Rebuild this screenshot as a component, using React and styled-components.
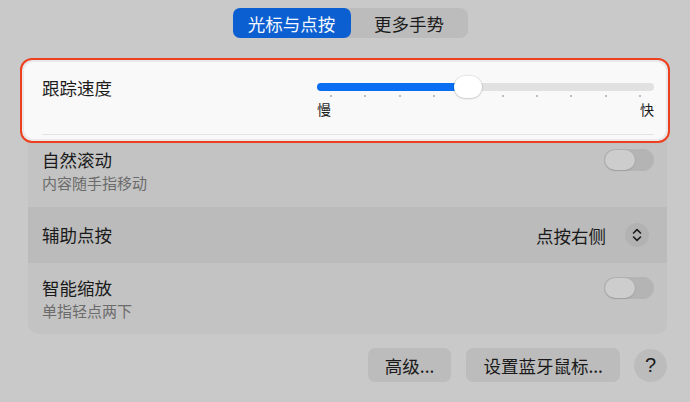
import React from 'react';
import styled, { createGlobalStyle } from 'styled-components';

const GlobalStyle = createGlobalStyle`
  html, body {
    margin: 0;
    padding: 0;
    background: #c9c9c9;
  }
  body {
    font-family: "Noto Sans CJK SC", "Noto Sans", sans-serif;
    color: #1d1d1d;
  }
`;

const Page = styled.div`
  width: 690px;
  height: 402px;
  box-sizing: border-box;
  padding: 8px 23px 0 28px;
  overflow: hidden;
`;

const TabBar = styled.div`
  display: flex;
  justify-content: center;
  padding-left: 5px;
`;

const Tabs = styled.div`
  display: flex;
  background: #bcbcbc;
  border-radius: 8px;
  height: 30px;
`;

const Tab = styled.div`
  width: ${(p) => (p.$active ? '118px' : '117px')};
  display: flex;
  align-items: center;
  justify-content: center;
  border-radius: 7px;
  font-size: 17.5px;
  background: ${(p) => (p.$active ? '#0b5fd0' : 'transparent')};
  color: ${(p) => (p.$active ? '#f4f8ff' : '#1d1d1d')};
`;

const Card = styled.div`
  margin-top: 20px;
  background: #c3c3c3;
  border-radius: 10px;
`;

const Spotlight = styled.div`
  margin: 0 -3px 0 -8px;
  border: 2px solid #ee3f1f;
  border-radius: 12px;
  padding: 2px;
  background: #e9e9e9;
`;

const SpotInner = styled.div`
  background: #f9f9f9;
  border-radius: 9px;
  padding: 14px 12px 4px 18px;
`;

const SpotRow = styled.div`
  display: flex;
  align-items: flex-start;
`;

const SpotLabel = styled.div`
  flex: 1;
  font-size: 17.5px;
  line-height: 22px;
  margin-top: 1px;
`;

const Slider = styled.div`
  width: 337px;
`;

const TrackWrap = styled.div`
  position: relative;
  height: 22px;
`;

const Track = styled.div`
  position: absolute;
  left: 0;
  right: 0;
  top: 7px;
  height: 8px;
  border-radius: 4px;
  background: #e1e1e1;
  overflow: hidden;
`;

const Fill = styled.div`
  height: 100%;
  background: #0a6ef3;
`;

const Tick = styled.span`
  position: absolute;
  top: 19px;
  width: 2px;
  height: 2px;
  border-radius: 1px;
  background: #a8a8a8;
`;

const Thumb = styled.div`
  position: absolute;
  top: 0;
  width: 28px;
  height: 22px;
  border-radius: 11px;
  background: #ffffff;
  box-shadow: 0 0.5px 2px rgba(0, 0, 0, 0.25), 0 0 0 0.5px rgba(0, 0, 0, 0.06);
`;

const SliderLabels = styled.div`
  display: flex;
  justify-content: space-between;
  margin-top: 3px;
  font-size: 14px;
  line-height: 16px;
`;

const Divider = styled.div`
  height: 1px;
  background: #e3e3e3;
  margin-top: 17px;
`;

const Row = styled.div`
  display: flex;
  align-items: ${(p) => (p.$center ? 'center' : 'flex-start')};
  padding: ${(p) => p.$pad};
  height: ${(p) => p.$height || 'auto'};
  box-sizing: border-box;
  background: ${(p) => (p.$dark ? '#bbbbbb' : 'transparent')};
`;

const RowText = styled.div`
  flex: 1;
`;

const Title = styled.div`
  font-size: 17.5px;
  line-height: 22px;
  color: #1a1a1a;
`;

const Subtitle = styled.div`
  font-size: 15px;
  line-height: 20px;
  color: #6b6b6b;
  margin-top: 2px;
`;

const Toggle = styled.div`
  width: 50px;
  height: 22px;
  border-radius: 11px;
  background: #b4b4b4;
  display: flex;
  align-items: center;
  padding: 0 1px;
  box-sizing: border-box;
`;

const Knob = styled.div`
  width: 30px;
  height: 20px;
  border-radius: 10px;
  background: #cdcdcd;
  box-shadow: 0 0.5px 1.5px rgba(0, 0, 0, 0.2);
`;

const Value = styled.div`
  font-size: 17.5px;
  color: #1a1a1a;
  margin-right: 19px;
`;

const Stepper = styled.div`
  width: 24px;
  height: 24px;
  border-radius: 12px;
  background: #b2b2b2;
  display: flex;
  align-items: center;
  justify-content: center;
  margin-right: 5px;
`;

const Footer = styled.div`
  display: flex;
  justify-content: flex-end;
  align-items: center;
  gap: 15px;
  margin-top: 14px;
`;

const Button = styled.div`
  height: 34px;
  padding: 0 17px;
  display: flex;
  align-items: center;
  border-radius: 7px;
  background: #bcbcbc;
  font-size: 17.5px;
  color: #1a1a1a;
`;

const HelpButton = styled.div`
  width: 33px;
  height: 33px;
  border-radius: 50%;
  background: #bcbcbc;
  display: flex;
  align-items: center;
  justify-content: center;
  font-size: 20px;
  color: #1a1a1a;
  font-family: "Liberation Sans", Arial, sans-serif;
  margin-left: -1px;
`;

const ticks = [14, 48, 83, 117, 186, 220, 254, 289, 323];
const value = 0.448;

const App = () => {
  return (
    <>
      <GlobalStyle />
      <Page>
        <TabBar>
          <Tabs>
            <Tab $active>光标与点按</Tab>
            <Tab>更多手势</Tab>
          </Tabs>
        </TabBar>
        <Card>
          <Spotlight>
            <SpotInner>
              <SpotRow>
                <SpotLabel>跟踪速度</SpotLabel>
                <Slider>
                  <TrackWrap>
                    <Track>
                      <Fill style={{ width: `${value * 100}%` }} />
                    </Track>
                    {ticks.map((x) => (
                      <Tick key={x} style={{ left: x - 1 }} />
                    ))}
                    <Thumb style={{ left: value * 337 - 14 }} />
                  </TrackWrap>
                  <SliderLabels>
                    <span>慢</span>
                    <span>快</span>
                  </SliderLabels>
                </Slider>
              </SpotRow>
              <Divider />
            </SpotInner>
          </Spotlight>
          <Row $pad="6px 13px 14px 14px">
            <RowText>
              <Title>自然滚动</Title>
              <Subtitle>内容随手指移动</Subtitle>
            </RowText>
            <Toggle>
              <Knob />
            </Toggle>
          </Row>
          <Row $dark $center $height="56px" $pad="0 13px 0 14px">
            <RowText>
              <Title>辅助点按</Title>
            </RowText>
            <Value>点按右侧</Value>
            <Stepper>
              <svg width="10" height="14" viewBox="0 0 10 14" fill="none">
                <path
                  d="M1.5 5 L5 1.6 L8.5 5 M1.5 9 L5 12.4 L8.5 9"
                  stroke="#1c1c1c"
                  strokeWidth="1.6"
                  strokeLinecap="round"
                  strokeLinejoin="round"
                />
              </svg>
            </Stepper>
          </Row>
          <Row $pad="14px 13px 13px 14px">
            <RowText>
              <Title>智能缩放</Title>
              <Subtitle>单指轻点两下</Subtitle>
            </RowText>
            <Toggle>
              <Knob />
            </Toggle>
          </Row>
        </Card>
        <Footer>
          <Button>高级...</Button>
          <Button>设置蓝牙鼠标...</Button>
          <HelpButton>?</HelpButton>
        </Footer>
      </Page>
    </>
  );
};

export default App;
